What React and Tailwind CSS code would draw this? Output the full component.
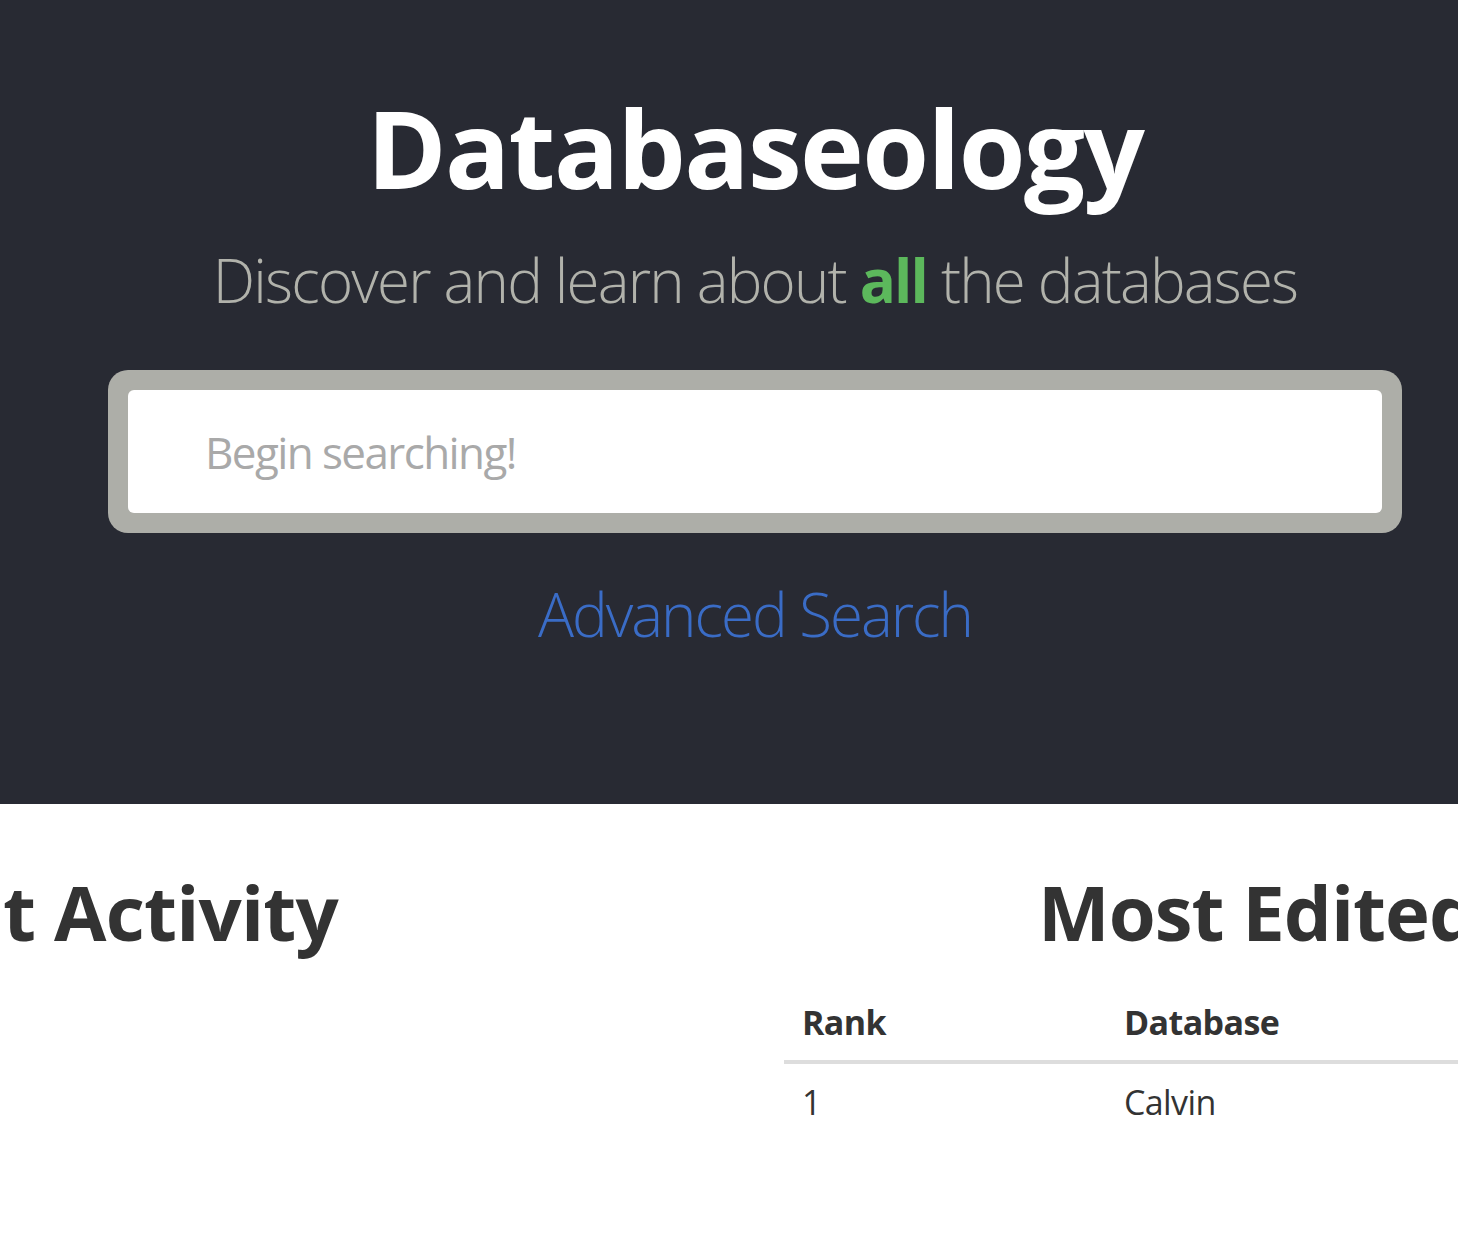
import React from 'react';

const font = { fontFamily: '"Open Sans", "Noto Sans", sans-serif' };

const App = () => {
    return (
        <div className="w-[1458px] h-[1240px] overflow-hidden bg-white" style={font}>
            <div className="w-[1510px]">
                {/* hero */}
                <div className="bg-[#282a33] h-[804px] pt-[94px] flex flex-col items-center">
                    <h1 className="text-[108px] leading-[108px] font-bold text-white tracking-[-1.6px]">Databaseology</h1>
                    <p className="mt-[48px] text-[60px] leading-[60px] font-light text-[#b1b2ab] tracking-[-1.8px] whitespace-nowrap">
                        Discover and learn about <span className="font-bold text-[#5cb85c]">all</span> the databases
                    </p>
                    <div className="mt-[60px] w-[1294px] rounded-[20px] bg-[#adaea8] p-[20px]">
                        <input
                            type="text"
                            placeholder="Begin searching!"
                            className="w-full h-[123px] rounded-[6px] bg-white pl-[77px] text-[44px] tracking-[-1.6px] text-[#333] placeholder:text-[#a9a9a9] outline-none"
                        />
                    </div>
                    <a href="#" className="mt-[51px] text-[60px] leading-[60px] font-light text-[#3a6cc6] tracking-[-2px]">Advanced Search</a>
                </div>

                {/* lower panels */}
                <div className="flex pt-[70px]">
                    <div className="w-[755px] shrink-0">
                        <div className="flex justify-end pr-[417px]">
                            <h2 className="shrink-0 text-[76px] leading-[76px] font-bold text-[#333] tracking-[-0.8px] whitespace-nowrap">Recent Activity</h2>
                        </div>
                    </div>
                    <div className="w-[755px] shrink-0">
                        <h2 className="text-[76px] leading-[76px] font-bold text-[#333] tracking-[-1px] pl-[283px] whitespace-nowrap">Most Edited Databases</h2>
                        <table className="mt-[34px] ml-[29px] w-[1000px] table-fixed text-[34px] leading-[48px] text-[#333] text-left tracking-[-0.6px]">
                            <colgroup>
                                <col className="w-[322px]" />
                                <col />
                            </colgroup>
                            <thead>
                                <tr className="border-b-[4px] border-[#dddddd]">
                                    <th className="px-[18px] py-[14px] font-bold">Rank</th>
                                    <th className="px-[18px] py-[14px] font-bold">Database</th>
                                </tr>
                            </thead>
                            <tbody>
                                <tr>
                                    <td className="px-[18px] py-[14px]">1</td>
                                    <td className="px-[18px] py-[14px]">Calvin</td>
                                </tr>
                            </tbody>
                        </table>
                    </div>
                </div>
            </div>
        </div>
    );
};

export default App;
